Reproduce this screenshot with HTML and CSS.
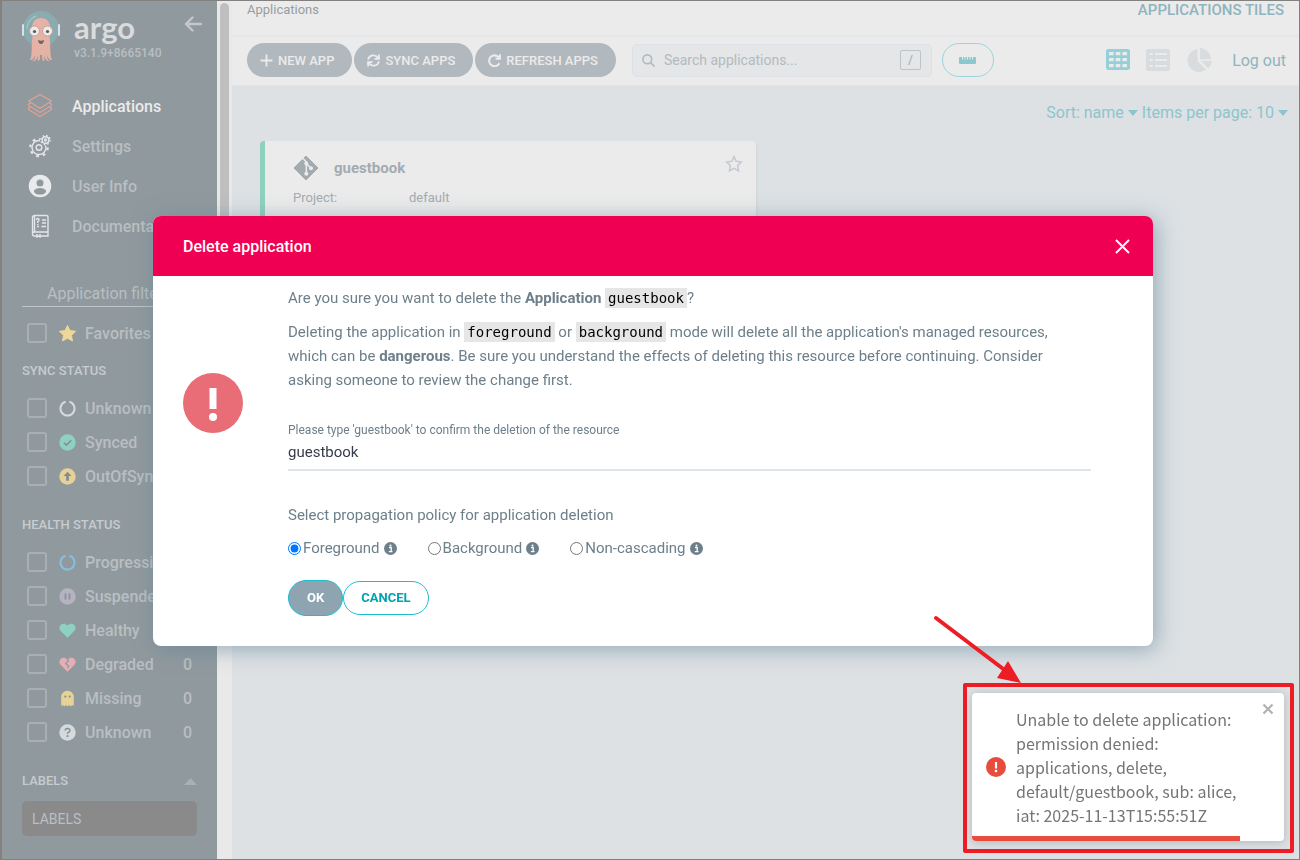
FILE: index.html
```html
<!DOCTYPE html>
<html lang="en">

<head>

  <meta charset="UTF-8">
  <meta name="viewport" content="width=device-width, initial-scale=1.0">

  <title>Applications Tiles - Argo CD</title>

  <link rel="stylesheet" href="styles.css">

</head>

<body>

  <aside class="sidebar">
    <div class="sidebar_logo">
      <svg class="mascot" viewBox="0 0 38 52">
        <circle cx="19" cy="19" r="18" fill="#8aacb1"/>
        <path d="M5 19a14 14 0 0 1 9-13" fill="none" stroke="#a5c3c6" stroke-width="1.5"/>
        <rect x="0" y="14" width="2" height="12" rx="1" fill="#d5e3ea"/>
        <rect x="36" y="14" width="2" height="12" rx="1" fill="#d5e3ea"/>
        <path d="M19 8c-6 0-9 4-9 10 0 5 1 8 0 13-.5 6 0 12-1 16 0 2-2 2-1 3 3 0 4-2 5-5 0 3-1 6-3 6 3 1 5-2 6-6 0 3-1 5 0 6 2 0 2-3 2-6h2c0 3 0 6 2 6 1-1 0-3 0-6 1 4 3 7 6 6-2 0-3-3-3-6 1 3 2 5 5 5 1-1-1-1-1-3-1-4-.5-10-1-16-1-5 0-8 0-13 0-6-3-10-9-10z" fill="#e4b3a5"/>
        <circle cx="12.500" cy="21" r="5" fill="#ebebeb" stroke="#d49e90"/>
        <circle cx="25.500" cy="21" r="5" fill="#ebebeb" stroke="#d49e90"/>
        <circle cx="12.500" cy="21.500" r="1.600" fill="#555a5e"/>
        <circle cx="25.500" cy="21.500" r="1.600" fill="#555a5e"/>
        <path d="M16 30q3 1.500 6 0q-.5 4-3 4t-3-4z" fill="#6e6663"/>
      </svg>
      <div class="brand">
        <span class="brand_name">argo</span>
        <span class="brand_version">v3.1.9+8665140</span>
      </div>
      <button class="collapse" aria-label="Collapse sidebar">
        <svg width="18" height="16" viewBox="0 0 18 16"><path d="M17 8H2M8.500 1.500L2 8l6.500 6.500" fill="none" stroke="#c4c8ca" stroke-width="2.400" stroke-linecap="round" stroke-linejoin="round"/></svg>
      </button>
    </div>

    <nav class="sidebar_nav">
      <a class="active" href="#">
        <svg width="26" height="26" viewBox="0 0 26 26" fill="none" stroke="#e0a396" stroke-width="1.200" stroke-linejoin="round"><path d="M13 1.500L24.500 8 13 15.500 1.500 8zM1.500 11L1.500 12.500 13 19.500l11.500-7V11M24.500 11l-3-1.500M1.500 11l3-1.500M1.500 15v1.500L13 23.500l11.500-7V15l-2.500-1M1.500 15L4 14"/></svg>
        Applications
      </a>
      <a href="#">
        <svg width="24" height="24" viewBox="0 0 24 24" fill="none" stroke="#e2e6e9" stroke-width="1.400">
          <circle cx="11" cy="13.500" r="7"/><circle cx="11" cy="13.500" r="2.800"/>
          <circle cx="11" cy="13.500" r="8.700" stroke-width="2.200" stroke-dasharray="2.800 4.030"/>
          <circle cx="17.500" cy="6" r="5.500" fill="#90999e" stroke="none"/>
          <circle cx="17.500" cy="6" r="3.300"/><circle cx="17.500" cy="6" r="1"/>
          <circle cx="17.500" cy="6" r="4.500" stroke-width="1.600" stroke-dasharray="1.600 1.934"/>
        </svg>
        Settings
      </a>
      <a href="#">
        <svg width="24" height="24" viewBox="0 0 24 24"><circle cx="12" cy="12" r="11.300" fill="#e9eaeb"/><circle cx="12" cy="9" r="3.500" fill="#90999e"/><ellipse cx="12" cy="17.300" rx="6" ry="3.300" fill="#90999e"/></svg>
        User Info
      </a>
      <a href="#">
        <svg width="24" height="24" viewBox="0 0 24 24" fill="none" stroke="#e2e6e9" stroke-width="1.400">
          <path d="M4.500 20V3.500a2 2 0 0 1 2-2h12a1.500 1.500 0 0 1 1.500 1.500v15H6.500a2 2 0 0 0 0 4H20v-4M6.500 18V1.500M9 20v3l1.500-1 1.500 1v-3M14 6h4M14 9h4M9 12.500h2M13.500 12.500h4.500"/>
          <path d="M8.500 6q0-1.500 1.300-1.500t1.200 1.500q0 1-1.200 1.500V9M9.800 10v1"/>
        </svg>
        Documentation
      </a>
    </nav>

    <input class="filter_name" type="text" aria-label="Application filters" placeholder="Application filters">

    <label class="filter favorites">
      <input type="checkbox">
      <svg viewBox="0 0 18 18"><path d="M9 .500l2.600 5.400 6 .800-4.400 4.200 1.100 6L9 14l-5.300 2.900 1.100-6L.4 6.700l6-.8z" fill="#ecd898" stroke="#ecd898" stroke-linejoin="round"/></svg>
      <span>Favorites</span>
    </label>

    <section class="filter_group">
      <h2>Sync Status</h2>
      <label class="filter"><input type="checkbox">
        <svg viewBox="0 0 18 18"><path d="M11 1.900a7.400 7.400 0 1 1-4 0" fill="none" stroke="#d5dadc" stroke-width="2.200"/></svg>
        <span>Unknown</span></label>
      <label class="filter"><input type="checkbox">
        <svg viewBox="0 0 18 18"><circle cx="9" cy="9" r="8.700" fill="#8ed1c0"/><path d="M5.300 9.200l2.600 2.600L13 6.700" fill="none" stroke="#848f94" stroke-width="1.600"/></svg>
        <span>Synced</span></label>
      <label class="filter"><input type="checkbox">
        <svg viewBox="0 0 18 18"><circle cx="9" cy="9" r="8.700" fill="#e6d196"/><path d="M9 4l4.300 4.500h-2.800v5h-3v-5H4.700z" fill="#848f94"/></svg>
        <span>OutOfSync</span></label>
    </section>

    <section class="filter_group">
      <h2>Health Status</h2>
      <label class="filter"><input type="checkbox">
        <svg viewBox="0 0 18 18"><path d="M11 1.900a7.400 7.400 0 1 1-4 0" fill="none" stroke="#87bfdf" stroke-width="2.200"/></svg>
        <span>Progressing</span></label>
      <label class="filter"><input type="checkbox">
        <svg viewBox="0 0 18 18"><circle cx="9" cy="9" r="8.700" fill="#b5b2c2"/><path d="M6.900 5.700v6.600M11.100 5.700v6.600" stroke="#8b929b" stroke-width="1.900"/></svg>
        <span>Suspended</span></label>
      <label class="filter"><input type="checkbox">
        <svg viewBox="0 0 18 18"><path d="M9 16.700L1.400 9C-2 4.500 4-1 9 3.700 14-1 20 4.500 16.600 9z" fill="#8ed1c0"/></svg>
        <span>Healthy</span></label>
      <label class="filter"><input type="checkbox">
        <svg viewBox="0 0 18 18"><path d="M9 16.700L1.400 9C-2 4.500 4-1 9 3.700 14-1 20 4.500 16.600 9z" fill="#e4afb4"/><path d="M8.500 2.500L10 5 7 8l3.200 2.500L9 13" fill="none" stroke="#90999e" stroke-width="1.300"/></svg>
        <span>Degraded</span><span class="count">0</span></label>
      <label class="filter"><input type="checkbox">
        <svg viewBox="0 0 18 18"><path d="M2.300 17V7.500a6.700 6.700 0 0 1 13.400 0V17l-1.700-1-1.600 1.500L10.700 16 9 17.500 7.300 16l-1.700 1.500L4 16z" fill="#e6d196"/><circle cx="6.700" cy="7" r="1.100" fill="#848f94"/><circle cx="11.300" cy="7" r="1.100" fill="#848f94"/></svg>
        <span>Missing</span><span class="count">0</span></label>
      <label class="filter"><input type="checkbox">
        <svg viewBox="0 0 18 18"><circle cx="9" cy="9" r="8.700" fill="#d5dadc"/><path d="M6.600 7q0-2.200 2.500-2.200t2.400 2q0 1.200-1.300 1.800T9 10.500" fill="none" stroke="#848f94" stroke-width="1.600"/><circle cx="9" cy="12.800" r="1.100" fill="#848f94"/></svg>
        <span>Unknown</span><span class="count">0</span></label>
    </section>

    <section class="filter_group">
      <h2>Labels <svg width="13" height="7" viewBox="0 0 13 7"><path d="M0 7L6.500 0 13 7z" fill="#a9afb2"/></svg></h2>
      <input class="filter_labels" type="text" aria-label="Labels" placeholder="LABELS">
    </section>
  </aside>

  <div class="scrollbar"><div class="scrollbar_thumb"></div></div>

  <main class="page">
    <header class="top_bar">
      <a href="#">Applications</a>
      <h1>Applications Tiles</h1>
    </header>

    <div class="tool_bar">
      <div class="actions">
        <button><svg viewBox="0 0 12 12"><path d="M6 .5v11M.5 6h11" stroke="#ebebeb" stroke-width="1.700"/></svg>New App</button>
        <button><svg viewBox="0 0 12 12" fill="none" stroke="#ebebeb" stroke-width="1.700"><path d="M1 5.200A5 5 0 0 1 10 3.400M11 .5v4H7M11 6.800A5 5 0 0 1 2 8.600M1 11.500v-4h4"/></svg>Sync Apps</button>
        <button><svg viewBox="0 0 12 12" fill="none" stroke="#ebebeb" stroke-width="1.900"><path d="M10.500 8.500A5 5 0 1 1 10 3.200M11 .3v4H7"/></svg>Refresh Apps</button>
      </div>
      <div class="search">
        <svg width="13" height="13" viewBox="0 0 13 13" fill="none" stroke="#b3babe" stroke-width="1.600"><circle cx="5.300" cy="5.300" r="4.400"/><path d="M8.500 8.500l4 4"/></svg>
        <input type="text" aria-label="Search applications" placeholder="Search applications...">
        <kbd>/</kbd>
      </div>
      <button class="ruler" aria-label="Toggle compact view">
        <svg width="17" height="7" viewBox="0 0 17 7"><rect width="17" height="7" rx="1" fill="#8ac8d0"/><path d="M3.500 0v2.500M6 0v2.500M8.500 0v2.500M11 0v2.500M13.500 0v2.500" stroke="#ebebeb"/></svg>
      </button>
      <div class="views">
        <button aria-label="Tiles"><svg width="24" height="22" viewBox="0 0 24 22"><path fill="#93d0d9" fill-rule="evenodd" d="M2.500 0h19A2.500 2.500 0 0 1 24 2.500v16a2.500 2.500 0 0 1-2.500 2.500h-19A2.500 2.500 0 0 1 0 18.500v-16A2.500 2.500 0 0 1 2.500 0zM3 3v3.300h4.600V3zM9.700 3v3.300h4.600V3zM16.400 3v3.300H21V3zM3 9v3.300h4.600V9zM9.700 9v3.300h4.600V9zM16.400 9v3.300H21V9zM3 15v3.300h4.600V15zM9.700 15v3.300h4.600V15zM16.400 15v3.300H21V15z"/></svg></button>
        <button aria-label="List"><svg width="24" height="22" viewBox="0 0 24 22"><rect width="24" height="22" rx="2.500" fill="#d8dcdf"/><path d="M3.500 5h3M3.500 11h3M3.500 17h3M9 5h12M9 11h12M9 17h12" stroke="#ebebeb" stroke-width="2.200"/></svg></button>
        <button aria-label="Summary"><svg width="26" height="24" viewBox="0 0 26 24" fill="#d8dcdf"><path d="M11.500 1v12l8.500 8.500A11.500 11.500 0 1 1 11.500 1zM14 0a11.300 11.300 0 0 1 11 11.300H14zM15 13h11q-.5 4.500-3.500 7.500z"/></svg></button>
        <a href="#">Log out</a>
      </div>
    </div>

    <div class="list_bar">
      <button>Sort: name <i class="caret"></i></button>
      <button>Items per page: 10 <i class="caret"></i></button>
    </div>

    <article class="tile">
      <div class="tile_title">
        <svg width="26" height="26" viewBox="0 0 26 26"><path d="M13 1l12 12-12 12L1 13z" fill="#a4abb0" stroke="#a4abb0" stroke-linejoin="round"/><path d="M10 3.500l3.300 3.500v12M13.300 8.500l4.500 4.500" fill="none" stroke="#ebebeb" stroke-width="1.600"/><circle cx="13.300" cy="8.500" r="2" fill="#ebebeb"/><circle cx="18" cy="13.300" r="2" fill="#ebebeb"/><circle cx="13.300" cy="18.700" r="2" fill="#ebebeb"/></svg>
        <h3>guestbook</h3>
        <button aria-label="Add to favorites"><svg width="18" height="18" viewBox="0 0 18 18"><path d="M9 1.600l2.200 4.700 5.100.7-3.700 3.600.9 5.200L9 13.300l-4.500 2.500.9-5.200L1.700 7l5.100-.7z" fill="none" stroke="#c3cad0" stroke-width="1.500"/></svg></button>
      </div>
      <dl>
        <dt>Project:</dt>
        <dd>default</dd>
      </dl>
    </article>
  </main>

  <div class="overlay">
    <form class="modal" role="dialog" aria-labelledby="modal_title">
      <div class="modal_header">
        <h2 id="modal_title">Delete application</h2>
        <button type="button" aria-label="Close"><svg width="15" height="15" viewBox="0 0 15 15"><path d="M1 1l13 13M14 1L1 14" stroke="#fff" stroke-width="2"/></svg></button>
      </div>
      <div class="modal_body">
        <svg class="modal_icon" width="60" height="60" viewBox="0 0 60 60"><circle cx="30" cy="30" r="30" fill="#e96d76"/><path d="M26.500 15h7v21h-7z" fill="#fff"/><circle cx="30" cy="44" r="4" fill="#fff"/></svg>
        <div class="modal_content">
          <p>Are you sure you want to delete the <b>Application</b> <code>guestbook</code>?</p>
          <p>Deleting the application in <code>foreground</code> or <code>background</code> mode will delete all the application's managed resources, which can be <b>dangerous</b>. Be sure you understand the effects of deleting this resource before continuing. Consider asking someone to review the change first.</p>
          <div class="field">
            <label for="confirm_name">Please type 'guestbook' to confirm the deletion of the resource</label>
            <input id="confirm_name" type="text" value="guestbook">
          </div>
          <p>Select propagation policy for application deletion</p>
          <div class="policies">
            <label><input type="radio" name="policy" checked>Foreground
              <svg width="13" height="13" viewBox="0 0 13 13"><circle cx="6.500" cy="6.500" r="6.500" fill="#6d7f8b"/><path d="M5 5.500h2.200v4M4.800 9.700h3.700" fill="none" stroke="#fff" stroke-width="1.300"/><circle cx="6.500" cy="3.400" r="1" fill="#fff"/></svg></label>
            <label><input type="radio" name="policy">Background
              <svg width="13" height="13" viewBox="0 0 13 13"><circle cx="6.500" cy="6.500" r="6.500" fill="#6d7f8b"/><path d="M5 5.500h2.200v4M4.800 9.700h3.700" fill="none" stroke="#fff" stroke-width="1.300"/><circle cx="6.500" cy="3.400" r="1" fill="#fff"/></svg></label>
            <label><input type="radio" name="policy">Non-cascading
              <svg width="13" height="13" viewBox="0 0 13 13"><circle cx="6.500" cy="6.500" r="6.500" fill="#6d7f8b"/><path d="M5 5.500h2.200v4M4.800 9.700h3.700" fill="none" stroke="#fff" stroke-width="1.300"/><circle cx="6.500" cy="3.400" r="1" fill="#fff"/></svg></label>
          </div>
          <div class="modal_buttons">
            <button class="ok" type="submit">OK</button>
            <button class="cancel" type="button">Cancel</button>
          </div>
        </div>
      </div>
    </form>
  </div>

  <div class="highlight">
    <svg class="arrow" width="90" height="70" viewBox="0 0 90 70"><path d="M3 3l66 50" stroke="#ee1c25" stroke-width="4" stroke-linecap="round"/><path d="M88 68l-24-5L75 46z" fill="#ee1c25"/></svg>
    <div class="toast" role="alert">
      <svg width="20" height="20" viewBox="0 0 20 20"><circle cx="10" cy="10" r="10" fill="#e74c3c"/><path d="M8.900 5h2.200v6.500H8.900z" fill="#fff"/><circle cx="10" cy="14" r="1.300" fill="#fff"/></svg>
      <p>Unable to delete application: permission denied: applications, delete, default/guestbook, sub: alice, iat: 2025-11-13T15:55:51Z</p>
      <button aria-label="Close notification"><svg width="12" height="12" viewBox="0 0 12 12"><path d="M1.500 1.500l9 9M10.500 1.500l-9 9" stroke="#b1b1b1" stroke-width="2.200"/></svg></button>
      <div class="toast_progress"></div>
    </div>
  </div>

</body>

</html>
```

FILE: styles.css
```css
* {
  box-sizing: border-box;
}
body {
  display: flex;
  margin: 0;
  height: 100vh;
  overflow: hidden;
  border: 1px solid #838080;
  border-left-width: 2px;
  background-color: #dde1e4;
  font-family: Roboto, sans-serif;
  font-size: 15px;
  color: #6d7f8b;
}
h1, h2, h3, p, dl, dd {
  margin: 0;
}
a {
  color: inherit;
  text-decoration: none;
}
button, input {
  margin: 0;
  padding: 0;
  border: 0;
  background: none;
  font: inherit;
  color: inherit;
  outline: 0;
}
svg {
  display: block;
  flex: none;
}

/* Sidebar */
.sidebar {
  flex: none;
  width: 215px;
  padding: 9px 20px 0;
  overflow: hidden;
  background-color: #90999e;
  color: #b9bfc2;
  font-size: 16px;
  font-weight: 500;
}
.sidebar_logo {
  display: flex;
  height: 52px;
}
.mascot {
  width: 38px;
  height: 52px;
}
.brand {
  display: flex;
  flex-direction: column;
  margin-left: 14px;
}
.brand_name {
  font-family: Lato, sans-serif;
  font-size: 31px;
  font-weight: 700;
  line-height: 34px;
  color: #d9dbdc;
}
.brand_version {
  font-size: 12px;
  line-height: 18px;
}
.collapse {
  align-self: flex-start;
  margin: 6px -5px 0 auto;
}
.sidebar_nav {
  margin-top: 24px;
}
.sidebar_nav a {
  display: flex;
  align-items: center;
  gap: 14px;
  height: 40px;
}
.sidebar_nav svg {
  width: 36px;
}
.sidebar_nav .active {
  color: #ebebeb;
}
.filter_name {
  width: 100%;
  height: 30px;
  margin-top: 31px;
  padding: 4px 0 0 25px;
  border-bottom: 1px solid #bfc4c6;
  font-weight: 400;
}
.sidebar ::placeholder {
  color: #b9bfc2;
}
.filter {
  display: flex;
  align-items: center;
  height: 34px;
  padding: 0 5px;
}
.filter input {
  appearance: none;
  width: 20px;
  height: 20px;
  border: 2px solid #a9afb2;
  border-radius: 3px;
}
.filter svg {
  width: 17px;
  height: 17px;
  margin: 0 9px 0 12px;
}
.filter .count {
  margin-left: auto;
}
.favorites {
  margin: 9px 0 -11px;
}
.filter_group {
  margin-top: 22px;
}
.filter_group h2 {
  display: flex;
  align-items: center;
  justify-content: space-between;
  margin-bottom: 10px;
  font-size: 13px;
  font-weight: 500;
  line-height: 20px;
  text-transform: uppercase;
  color: #c6ccd0;
}
.filter_labels {
  width: 100%;
  height: 35px;
  padding: 0 10px;
  border-radius: 5px;
  background-color: #8a8a8a;
  font-size: 14px;
  font-weight: 400;
}
.scrollbar {
  flex: none;
  width: 15px;
  padding: 2px 3px;
  background-color: #e9e9e9;
}
.scrollbar_thumb {
  height: 50%;
  border-radius: 5px;
  background-color: #bfbfbf;
}

/* Applications page */
.page {
  flex: 1;
  min-width: 0;
}
.top_bar {
  display: flex;
  justify-content: space-between;
  height: 36px;
  padding: 0 15px;
  border-bottom: 2px solid #e5e6e7;
  background-color: #ebebeb;
  font-size: 13px;
  line-height: 18px;
  color: #989da1;
}
.top_bar h1 {
  font-size: 15px;
  font-weight: 500;
  line-height: 18px;
  text-transform: uppercase;
  color: #8fb4be;
}
.tool_bar {
  display: flex;
  align-items: center;
  height: 49px;
  padding: 0 13px 2px 15px;
  border-bottom: 1px solid #e3e5e7;
  background-color: #ebebeb;
}
.actions {
  display: flex;
  gap: 2px;
}
.actions button {
  display: flex;
  align-items: center;
  gap: 5px;
  height: 34px;
  padding: 0 18px 0 13px;
  border-radius: 17px;
  background-color: #b1b8be;
  font-size: 13px;
  font-weight: 500;
  text-transform: uppercase;
  color: #ebebeb;
}
.actions svg {
  width: 13px;
  height: 13px;
}
.search {
  display: flex;
  align-items: center;
  width: 300px;
  height: 33px;
  margin: 0 10px 0 16px;
  padding: 0 10px 0 9px;
  border: 1px solid #dde1e5;
  border-radius: 5px;
  background-color: #e4e6e8;
}
.search input {
  flex: 1;
  min-width: 0;
  margin-left: 9px;
  font-size: 14px;
}
.search ::placeholder {
  color: #b3babe;
}
.search kbd {
  width: 21px;
  height: 20px;
  border: 1px solid #bcc3c9;
  border-radius: 2px;
  font-family: inherit;
  font-size: 12px;
  line-height: 18px;
  text-align: center;
  color: #a0a7ab;
}
.ruler {
  display: flex;
  align-items: center;
  justify-content: center;
  width: 52px;
  height: 34px;
  border: 1px solid #9ad5db;
  border-radius: 17px;
}
.views {
  display: flex;
  align-items: center;
  gap: 16px;
  margin-left: auto;
  font-size: 16px;
  color: #8fb4be;
}
.views a {
  margin-left: 4px;
}
.list_bar {
  display: flex;
  justify-content: flex-end;
  gap: 4px;
  padding: 16px 11px 18px;
  font-size: 16px;
  line-height: 21px;
  color: #8cc5cd;
}
.list_bar button {
  display: flex;
  align-items: center;
  gap: 4px;
}
.caret {
  border: 5px solid transparent;
  border-top: 6px solid #8cc5cd;
  border-bottom: 0;
}
.tile {
  width: 496px;
  height: 200px;
  margin-left: 28px;
  padding: 14px 13px 0 28px;
  border-left: 5px solid #8fd1bf;
  border-radius: 4px;
  background-color: #ebebeb;
  box-shadow: 1px 2px 3px #d0d6da;
  color: #a4abb0;
}
.tile_title {
  display: flex;
  align-items: center;
}
.tile_title h3 {
  margin: 0 auto 0 15px;
  font-size: 15px;
  font-weight: 700;
}
.tile_title button {
  align-self: flex-start;
}
.tile dl {
  display: grid;
  grid-template-columns: 116px 1fr;
  margin-top: 7px;
  font-size: 13px;
  line-height: 20px;
}

/* Delete dialog */
.overlay {
  position: fixed;
  inset: 0;
  display: flex;
  align-items: center;
  justify-content: center;
  padding: 2px 0 0 6px;
}
.modal {
  width: 1000px;
  max-width: 100%;
  border-radius: 8px;
  background-color: #fff;
  box-shadow: 3px 3px 22px rgba(95, 130, 152, .6);
}
.modal_header {
  display: flex;
  align-items: center;
  justify-content: space-between;
  height: 60px;
  padding: 0 23px 0 30px;
  border-radius: 8px 8px 0 0;
  background-color: #f00052;
  color: #fff;
}
.modal_header h2 {
  font-size: 16px;
  font-weight: 500;
}
.modal_body {
  display: flex;
  gap: 45px;
  padding: 10px 62px 30px 30px;
}
.modal_icon {
  margin-top: 87px;
}
.modal_content {
  flex: 1;
  line-height: 24px;
}
.modal_content p {
  margin-bottom: 10px;
  padding-right: 24px;
}
.modal_content b {
  font-weight: 700;
}
code {
  padding: 2px 3px;
  background-color: #e6e6e6;
  font-family: "DejaVu Sans Mono", monospace;
  font-size: 14px;
  line-height: 20px;
  color: #000;
}
.field {
  margin: 30px 0 32px;
}
.field label {
  display: block;
  font-size: 12px;
  line-height: 16px;
}
.field input {
  display: block;
  width: 100%;
  height: 33px;
  padding-bottom: 3px;
  border-bottom: 2px solid #dee6eb;
  color: #363c4a;
}
.policies {
  display: flex;
  gap: 31px;
  line-height: 22px;
}
.policies label {
  display: flex;
  align-items: center;
}
.policies input {
  width: 13px;
  height: 13px;
  margin-right: 2px;
}
.policies svg {
  margin-left: 4px;
}
.modal_buttons {
  display: flex;
  align-items: center;
  margin-top: 21px;
}
.modal_buttons button {
  height: 34px;
  padding: 0 17px;
  border: 1px solid #1fbdd0;
  border-radius: 18px;
  font-size: 13px;
  font-weight: 700;
  text-transform: uppercase;
  color: #00a2b3;
}
.modal_buttons .ok {
  height: 36px;
  padding: 0 18px;
  background-color: #8fa4b1;
  color: #fff;
}

/* Error notification */
.highlight {
  position: fixed;
  right: 6px;
  bottom: 7px;
  width: 331px;
  padding: 6px 6px 8px 5px;
  border: 4px solid #ee1c25;
  border-radius: 2px;
}
.arrow {
  position: absolute;
  top: -72px;
  left: -34px;
}
.toast {
  position: relative;
  display: flex;
  align-items: center;
  gap: 10px;
  padding: 14px 10px 14px 14px;
  overflow: hidden;
  border-radius: 4px;
  background-color: #fff;
  box-shadow: 0 1px 10px rgba(0, 0, 0, .2);
  font-family: "Noto Sans CJK SC", sans-serif;
  font-size: 16px;
  line-height: 24px;
  color: #757575;
}
.toast p {
  flex: 1;
}
.toast button {
  align-self: flex-start;
  margin-top: -4px;
}
.toast_progress {
  position: absolute;
  bottom: 0;
  left: 0;
  width: 86%;
  height: 5px;
  background-color: #e74c3c;
}
```
